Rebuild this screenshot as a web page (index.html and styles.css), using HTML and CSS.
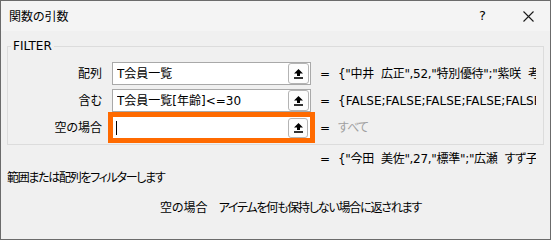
FILE: index.html
```html
<!DOCTYPE html>
<html lang="ja">
<head>
<meta charset="utf-8">
<link rel="stylesheet" href="styles.css">
</head>
<body>
<div class="window">
  <div class="titlebar">
    <span class="title">関数の引数</span>
    <span class="help">?</span>
    <span class="close"><svg width="11" height="11" viewBox="0 0 11 11"><path d="M0.5 0.5 L10.5 10.5 M10.5 0.5 L0.5 10.5" stroke="#1a1a1a" stroke-width="1.1" fill="none"/></svg></span>
  </div>
  <fieldset class="group">
    <legend class="group-title">FILTER</legend>
    <div class="args">
      <span class="arg-label">配列</span>
      <div class="field"><span class="field-text">T会員一覧</span><span class="ref-btn"><svg width="9" height="10" viewBox="0 0 9 10"><path d="M4.5 0 L9 4.5 H6 V7 H3 V4.5 H0 Z" fill="#000"/><rect x="0" y="8.2" width="9" height="1.6" fill="#000"/></svg></span></div>
      <span class="eq">=</span>
      <span class="val val-names">{"中井&nbsp;&nbsp;広正",52,"特別優待";"紫咲&nbsp;&nbsp;考</span>

      <span class="arg-label">含む</span>
      <div class="field"><span class="field-text">T会員一覧[年齢]&lt;=30</span><span class="ref-btn"><svg width="9" height="10" viewBox="0 0 9 10"><path d="M4.5 0 L9 4.5 H6 V7 H3 V4.5 H0 Z" fill="#000"/><rect x="0" y="8.2" width="9" height="1.6" fill="#000"/></svg></span></div>
      <span class="eq">=</span>
      <span class="val">{FALSE;FALSE;FALSE;FALSE;FALSE;FALSE</span>

      <span class="arg-label">空の場合</span>
      <div class="field field-active"><span class="caret"></span><span class="ref-btn ref-btn-active"><svg width="9" height="10" viewBox="0 0 9 10"><path d="M4.5 0 L9 4.5 H6 V7 H3 V4.5 H0 Z" fill="#000"/><rect x="0" y="8.2" width="9" height="1.6" fill="#000"/></svg></span></div>
      <span class="eq">=</span>
      <span class="val val-muted">すべて</span>
    </div>
  </fieldset>
  <div class="result"><span class="eq">=</span><span class="val val-names">{"今田&nbsp;&nbsp;美佐",27,"標準";"広瀬&nbsp;&nbsp;すず子",</span></div>
  <p class="desc">範囲または配列をフィルターします</p>
  <p class="arg-desc"><span class="arg-desc-name">空の場合</span><span>アイテムを何も保持しない場合に返されます</span></p>
</div>
</body>
</html>
```
FILE: styles.css
```css
html, body {
  margin: 0;
  padding: 0;
  background: #f0f0f0;
}
body {
  font-family: "DejaVu Sans", "Noto Sans CJK JP", sans-serif;
  font-size: 12px;
  line-height: 16px;
  color: #000;
  font-feature-settings: "palt";
}
.window {
  box-sizing: border-box;
  width: 551px;
  height: 240px;
  border: 1px solid #6b6b6b;
  background: #f0f0f0;
  overflow: hidden;
}
.titlebar {
  height: 30px;
  background: #f4f4f4;
  display: flex;
  align-items: center;
  padding-left: 8px;
}
.title {
  flex: 1;
  padding-top: 1px;
}
.help {
  width: 8px;
  margin-right: 36px;
  font-size: 13px;
}
.close {
  display: flex;
  margin-right: 16px;
  margin-top: 1px;
}
.group {
  box-sizing: border-box;
  margin: 7px 0 0 6px;
  width: 537px;
  padding: 8px 0 5px 0;
  border: 1px solid #dcdcdc;
  min-width: 0;
}
.group-title {
  margin-left: 3px;
  padding: 0 2px;
  line-height: 16px;
}
.args {
  display: grid;
  grid-template-columns: 104px 199px 27px 198px;
  grid-auto-rows: 23px;
  row-gap: 4px;
  align-items: center;
}
.arg-label {
  text-align: right;
  padding-right: 10px;
  white-space: nowrap;
}
.field {
  box-sizing: border-box;
  height: 23px;
  border: 1px solid #a9a9a9;
  background: #fff;
  display: flex;
  align-items: center;
  padding-left: 4px;
  padding-right: 1px;
}
.field-text {
  flex: 1;
  white-space: nowrap;
  overflow: hidden;
}
.field-active {
  outline: 5px solid #ff6a00;
  outline-offset: -1px;
  padding-left: 3px;
}
.caret {
  flex: 1;
  height: 14px;
  border-left: 1px solid #000;
}
.ref-btn {
  box-sizing: border-box;
  width: 21px;
  height: 21px;
  border: 1px solid #b4b4b4;
  border-radius: 3px;
  background: #fdfdfd;
  display: flex;
  align-items: center;
  justify-content: center;
}
.ref-btn-active {
  width: 20px;
  height: 20px;
  margin-right: 1px;
}
.eq {
  padding-left: 9px;
  width: 18px;
}
.val {
  white-space: nowrap;
  overflow: hidden;
}
.val-names {
  letter-spacing: -0.3px;
}
.val-muted {
  color: #a0a0a0;
  letter-spacing: -1px;
}
.result {
  display: flex;
  padding-left: 310px;
  margin-top: 6px;
}
.result .val {
  width: 198px;
}
.desc {
  margin: 3px 0 0 6px;
  letter-spacing: -1.3px;
}
.arg-desc {
  margin: 14px 0 0 159px;
  display: flex;
  letter-spacing: -1.2px;
}
.arg-desc-name {
  margin-right: 11px;
  letter-spacing: 0;
}
```
